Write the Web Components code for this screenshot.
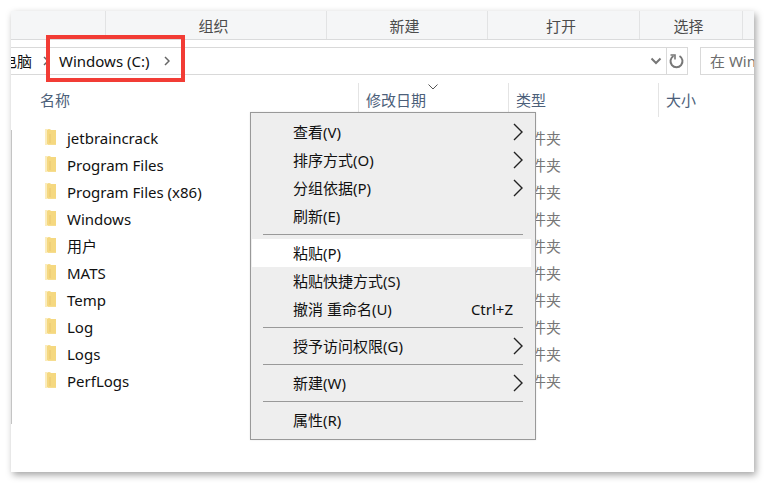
<!DOCTYPE html>
<html lang="zh-CN">
<head>
<meta charset="utf-8">
<title>Windows (C:)</title>
<style>
  html, body { height: 100%; }
  body {
    margin: 0; padding: 11px; box-sizing: border-box; background: #fff; color: #111;
    font: 15px/20px "Noto Sans", "Noto Sans CJK SC", sans-serif;
  }
</style>
</head>
<body>
<explorer-window>
  <ribbon-bar slot="ribbon">
    <ribbon-group></ribbon-group>
    <ribbon-group>组织</ribbon-group>
    <ribbon-group>新建</ribbon-group>
    <ribbon-group>打开</ribbon-group>
    <ribbon-group>选择</ribbon-group>
    <ribbon-group last></ribbon-group>
  </ribbon-bar>
  <address-bar slot="address">
    <path-crumb>电脑</path-crumb>
    <path-crumb marked>Windows (C:)</path-crumb>
  </address-bar>
  <file-list slot="content"></file-list>
  <context-menu slot="menu">
    <menu-entry submenu>查看(V)</menu-entry>
    <menu-entry submenu>排序方式(O)</menu-entry>
    <menu-entry submenu>分组依据(P)</menu-entry>
    <menu-entry>刷新(E)</menu-entry>
    <menu-rule></menu-rule>
    <menu-entry active>粘贴(P)</menu-entry>
    <menu-entry>粘贴快捷方式(S)</menu-entry>
    <menu-entry>撤消 重命名(U)<span slot="shortcut">Ctrl+Z</span></menu-entry>
    <menu-rule></menu-rule>
    <menu-entry submenu>授予访问权限(G)</menu-entry>
    <menu-rule></menu-rule>
    <menu-entry submenu>新建(W)</menu-entry>
    <menu-rule></menu-rule>
    <menu-entry>属性(R)</menu-entry>
  </context-menu>
</explorer-window>

<script>
  const define = (name, html) => {
    const template = document.createElement('template');
    template.innerHTML = html;
    customElements.define(name, class extends HTMLElement {
      constructor() {
        super();
        this.attachShadow({ mode: 'open' }).append(template.content.cloneNode(true));
      }
    });
  };

  define('explorer-window', `
    <style>
      :host { display: block; position: relative; height: 100%; box-sizing: border-box; }
      .frame {
        display: flex; flex-direction: column; height: 100%; overflow: hidden;
        background: #fff; box-shadow: 2px 3px 7px rgba(0,0,0,.36);
      }
      .body { display: flex; flex: 1; min-height: 0; }
      .edge { flex: 0 0 1px; margin: 55px 0 48px; background: #c4c4c4; }
      ::slotted([slot=content]) { flex: 1; min-width: 0; }
      ::slotted([slot=menu]) { position: absolute; left: 239px; top: 101px; }
    </style>
    <div class="frame">
      <slot name="ribbon"></slot>
      <slot name="address"></slot>
      <div class="body"><div class="edge"></div><slot name="content"></slot></div>
    </div>
    <slot name="menu"></slot>`);

  define('ribbon-bar', `
    <style>
      :host {
        display: grid; grid-template-columns: 95px 221fr 161fr 152fr 103fr 11px;
        height: 28px; flex: none; background: #f5f6f7; border-bottom: 1px solid #dadbdc;
      }
    </style>
    <slot></slot>`);

  define('ribbon-group', `
    <style>
      :host {
        display: flex; align-items: center; justify-content: center; box-sizing: border-box;
        padding: 2px 5px 0 0; color: #4c4c4c; min-width: 0;
        border-right: 1px solid #e2e3e4;
      }
      :host([last]) { border: 0; }
    </style>
    <slot></slot>`);

  define('address-bar', `
    <style>
      :host { display: flex; flex: none; gap: 12px; padding: 7px 0 0; height: 28px; }
      .path { display: flex; flex: 1; min-width: 0; border: 1px solid #d9d9d9; border-left: 0; box-sizing: border-box; }
      .space { flex: 1; }
      button {
        display: grid; place-items: center; width: 21px; padding: 0; border: 0;
        background: none; color: #777;
      }
      .refresh { border-left: 1px solid #d9d9d9; }
      svg { fill: none; stroke: currentColor; }
      input {
        flex: 0 0 54px; min-width: 0; box-sizing: border-box; padding: 0 0 0 9px; border: 1px solid #d9d9d9;
        border-right: 0; font: inherit; background: #fff;
      }
      input::placeholder { color: #6d6d6d; opacity: 1; }
    </style>
    <nav class="path" aria-label="地址">
      <slot></slot>
      <span class="space"></span>
      <button aria-label="历史记录"><svg width="12" height="8" viewBox="0 0 12 8" stroke-width="2"><path d="M1.500 1.500 6 6l4.500-4.500"/></svg></button>
      <button class="refresh" aria-label="刷新"><svg width="16" height="16" viewBox="0 0 16 16" stroke-width="2"><path d="M10.500 3A6 6 0 1 1 4.500 3"/><path d="M1.500 2h4.500v4.500" stroke-width="1.600"/></svg></button>
    </nav>
    <input type="text" aria-label="搜索" placeholder="在 Win">`);

  define('path-crumb', `
    <style>
      :host { display: flex; align-items: center; position: relative; padding-right: 9px; }
      :host([marked]) { padding: 0 20px 0 7px; }
      a { color: #111; text-decoration: none; white-space: nowrap; margin-right: 11px; }
      :host(:not([marked])) a { display: flex; justify-content: flex-end; width: 21px; overflow: hidden; }
      :host([marked]) a { margin-right: 15px; }
      svg { fill: none; stroke: #666; stroke-width: 1.500; margin-right: -6px; }
      .mark { display: none; }
      :host([marked]) .mark {
        display: block; position: absolute; inset: -13px -1px -8px -6px;
        border: 4px solid #f23c35; pointer-events: none;
      }
    </style>
    <a href="#"><slot></slot></a>
    <svg width="6" height="10" viewBox="0 0 6 10"><path d="M1 1l4 4-4 4"/></svg>
    <span class="mark"></span>`);

  const folder = `<svg width="12" height="16" viewBox="0 0 12 16" aria-hidden="true">
    <path d="M0 0h5l1 1h5v15H0z" fill="#f6dd90"/><path d="M0 0h3v16H0z" fill="#fbecbc"/>
    <path d="M2 1h9v14H2z" fill="#f5d880"/><path d="M4 5h2v9H4z" fill="#efcf78"/></svg>`;
  const names = ['jetbraincrack', 'Program Files', 'Program Files (x86)', 'Windows', '用户', 'MATS', 'Temp', 'Log', 'Logs', 'PerfLogs'];

  define('file-list', `
    <style>
      :host { display: block; padding-top: 8px; }
      table { width: 100%; table-layout: fixed; border-collapse: separate; border-spacing: 0; }
      th {
        height: 34px; padding: 0 7px; box-sizing: border-box; border-right: 1px solid #e4e4e4;
        text-align: left; font-weight: 400; color: #4c607a; position: relative;
      }
      th:first-child { padding-left: 28px; }
      th:last-child { border: 0; }
      thead::after { content: ""; display: block; height: 7px; }
      .sort { position: absolute; left: 69px; top: 1px; fill: none; stroke: #555; }
      td { height: 27px; padding: 0 7px; box-sizing: border-box; color: #777; }
      td:first-child { padding-left: 33px; color: #111; }
      .name { display: flex; align-items: center; gap: 10px; }
      .name svg { margin-top: -2px; }
      .name span { flex: 1; }
    </style>
    <table>
      <colgroup><col style="width:347px"><col style="width:150px"><col style="width:150px"><col></colgroup>
      <thead><tr><th>名称</th><th>修改日期<svg class="sort" width="10" height="6" viewBox="0 0 10 6"><path d="M.5.5 5 5 9.500.5"/></svg></th><th>类型</th><th>大小</th></tr></thead>
      <tbody>${names.map(n => `<tr><td><div class="name">${folder}<span>${n}</span></div></td><td></td><td>文件夹</td><td></td></tr>`).join('')}</tbody>
    </table>`);

  define('context-menu', `
    <style>
      :host {
        display: block; width: 286px; box-sizing: border-box; padding: 5px 4px 5px 1px;
        background: #eee; border: 1px solid #999; box-shadow: 0 0 2px rgba(0,0,0,.1);
      }
    </style>
    <div role="menu"><slot></slot></div>`);

  define('menu-entry', `
    <style>
      :host { display: block; }
      button {
        display: flex; align-items: center; width: 100%; height: 28px; padding: 0 8px 0 41px;
        border: 0; background: none; color: #111; font: inherit; text-align: left; white-space: nowrap;
      }
      :host([active]) button { background: #fff; }
      .label { flex: 1; }
      svg { display: none; fill: none; stroke: #222; stroke-width: 1.400; }
      :host([submenu]) svg { display: block; }
      ::slotted([slot=shortcut]) { margin-right: 10px; }
    </style>
    <button role="menuitem"><span class="label"><slot></slot></span><slot name="shortcut"></slot>
      <svg width="10" height="18" viewBox="0 0 10 18"><path d="M1 1l8 8-8 8"/></svg></button>`);

  define('menu-rule', `
    <style>
      :host { display: block; padding: 4px 8px 4px 11px; }
      hr { margin: 0; border: 0; height: 1px; background: #999; }
    </style>
    <hr>`);
</script>
</body>
</html>
